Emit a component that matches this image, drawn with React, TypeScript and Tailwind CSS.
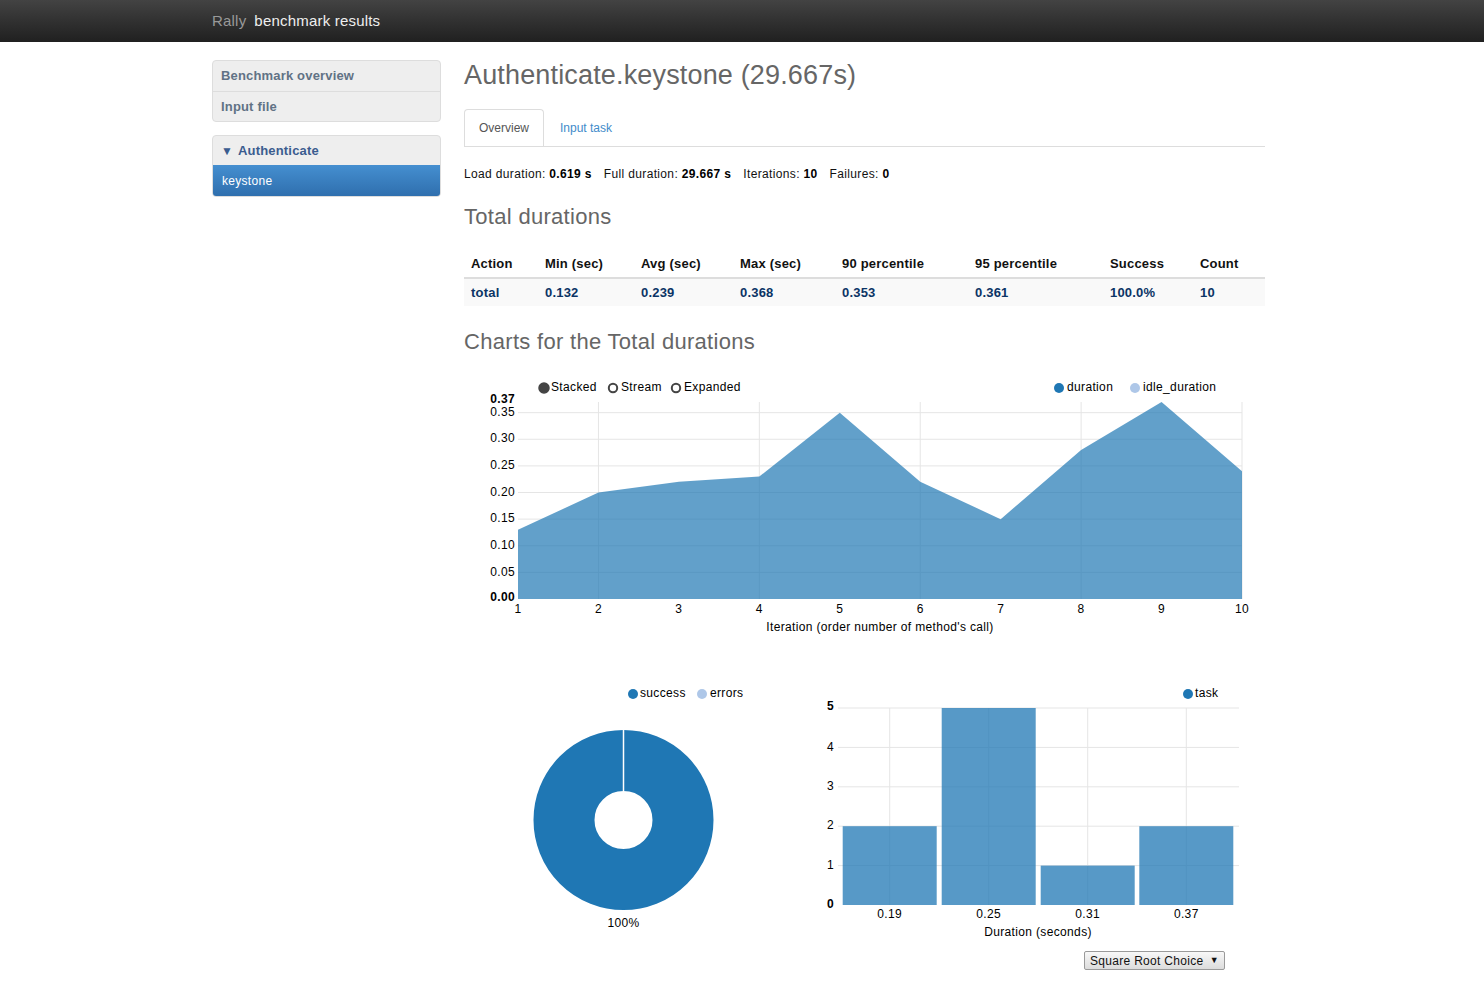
import React from 'react'

const areaData = [0.13, 0.2, 0.22, 0.23, 0.35, 0.22, 0.15, 0.28, 0.37, 0.24]
const ax = (i: number) => 54 + i * 80.444
const ay = (v: number) => 228 - v * 532.4

const histData = [2, 5, 1, 2]
const hy = (v: number) => 224 - v * 39.4

const cols = [
  { label: 'Action', value: 'total', w: 'w-[74px]' },
  { label: 'Min (sec)', value: '0.132', w: 'w-[96px]' },
  { label: 'Avg (sec)', value: '0.239', w: 'w-[99px]' },
  { label: 'Max (sec)', value: '0.368', w: 'w-[102px]' },
  { label: '90 percentile', value: '0.353', w: 'w-[133px]' },
  { label: '95 percentile', value: '0.361', w: 'w-[135px]' },
  { label: 'Success', value: '100.0%', w: 'w-[90px]' },
  { label: 'Count', value: '10', w: 'w-[72px]' },
]

function AreaChart() {
  const pts = areaData.map((v, i) => `${ax(i)},${ay(v)}`).join(' L')
  const path = `M${ax(0)},228 L${pts} L${ax(9)},228 Z`
  const yTicks = [0.05, 0.1, 0.15, 0.2, 0.25, 0.3, 0.35]
  return (
    <svg width={801} height={270} className="block text-[12px] tracking-[0.35px]">
      {/* legend */}
      <circle cx={80} cy={17} r={5} fill="#444" stroke="#444" strokeWidth={1.5} />
      <text x={87} y={17} dominantBaseline="middle" fill="#000">Stacked</text>
      <circle cx={149} cy={17} r={4.2} fill="none" stroke="#444" strokeWidth={2} />
      <text x={157} y={17} dominantBaseline="middle" fill="#000">Stream</text>
      <circle cx={212} cy={17} r={4.2} fill="none" stroke="#444" strokeWidth={2} />
      <text x={220} y={17} dominantBaseline="middle" fill="#000">Expanded</text>
      <circle cx={595} cy={17} r={5} fill="#1f77b4" />
      <text x={603} y={17} dominantBaseline="middle" fill="#000">duration</text>
      <circle cx={671} cy={17} r={5} fill="#aec7e8" />
      <text x={679} y={17} dominantBaseline="middle" fill="#000">idle_duration</text>

      {/* grid */}
      {yTicks.map((t) => (
        <line key={t} x1={54} x2={778} y1={ay(t)} y2={ay(t)} stroke="#e5e5e5" />
      ))}
      {[1, 3, 5, 7, 9].map((i) => (
        <line key={i} x1={ax(i)} x2={ax(i)} y1={31} y2={228} stroke="#e5e5e5" />
      ))}

      <path d={path} fill="#1f77b4" fillOpacity={0.7} />

      {/* y axis */}
      {yTicks.map((t) => (
        <text key={t} x={51} y={ay(t)} textAnchor="end" dominantBaseline="middle" fill="#000">
          {t.toFixed(2)}
        </text>
      ))}
      <text x={51} y={29} textAnchor="end" dominantBaseline="middle" fontWeight="bold" fill="#000">0.37</text>
      <text x={51} y={227} textAnchor="end" dominantBaseline="middle" fontWeight="bold" fill="#000">0.00</text>

      {/* x axis */}
      {areaData.map((_, i) => (
        <text key={i} x={ax(i)} y={239} textAnchor="middle" dominantBaseline="middle" fill="#000">
          {i + 1}
        </text>
      ))}
      <text x={416} y={257} textAnchor="middle" dominantBaseline="middle" fill="#000">
        Iteration (order number of method's call)
      </text>
    </svg>
  )
}

function PieChart() {
  return (
    <svg width={330} height={255} className="block text-[12px] tracking-[0.35px]">
      <circle cx={169} cy={13} r={5} fill="#1f77b4" />
      <text x={176} y={13} dominantBaseline="middle" fill="#000">success</text>
      <circle cx={238} cy={13} r={5} fill="#aec7e8" />
      <text x={246} y={13} dominantBaseline="middle" fill="#000">errors</text>

      <circle cx={159.5} cy={139} r={59.5} fill="none" stroke="#1f77b4" strokeWidth={61} />
      <line x1={159.5} x2={159.5} y1={49} y2={110} stroke="#fff" strokeWidth={1.5} />
      <text x={159.5} y={243} textAnchor="middle" dominantBaseline="middle" fill="#000">100%</text>
    </svg>
  )
}

function Histogram() {
  const centers = [95.7, 194.7, 293.7, 392.3]
  const labels = ['0.19', '0.25', '0.31', '0.37']
  return (
    <svg width={471} height={265} className="block text-[12px] tracking-[0.35px]">
      <circle cx={394} cy={13} r={5} fill="#1f77b4" />
      <text x={401} y={13} dominantBaseline="middle" fill="#000">task</text>

      {[1, 2, 3, 4, 5].map((t) => (
        <line key={t} x1={44} x2={445} y1={hy(t)} y2={hy(t)} stroke="#e5e5e5" />
      ))}
      {centers.map((c) => (
        <line key={c} x1={c} x2={c} y1={27} y2={224} stroke="#e5e5e5" />
      ))}
      {histData.map((v, i) => (
        <rect key={i} x={centers[i] - 47} y={hy(v)} width={94} height={224 - hy(v)} fill="#1f77b4" fillOpacity={0.75} />
      ))}

      {[1, 2, 3, 4].map((t) => (
        <text key={t} x={40} y={hy(t)} textAnchor="end" dominantBaseline="middle" fill="#000">{t}</text>
      ))}
      <text x={40} y={26} textAnchor="end" dominantBaseline="middle" fontWeight="bold" fill="#000">5</text>
      <text x={40} y={224} textAnchor="end" dominantBaseline="middle" fontWeight="bold" fill="#000">0</text>

      {centers.map((c, i) => (
        <text key={c} x={c} y={234} textAnchor="middle" dominantBaseline="middle" fill="#000">{labels[i]}</text>
      ))}
      <text x={244} y={252} textAnchor="middle" dominantBaseline="middle" fill="#000">Duration (seconds)</text>
    </svg>
  )
}

export default function App() {
  return (
    <div className="min-h-screen bg-white font-['Liberation_Sans',Arial,sans-serif] text-[#333]">
      <div className="h-[42px] bg-linear-to-b from-[#434343] to-[#202020]">
        <div className="w-[1060px] mx-auto h-full flex items-center text-[15px] tracking-[0.2px]">
          <span className="text-[#999]">Rally</span>
          <span className="ml-[8px] text-[#eee]">benchmark results</span>
        </div>
      </div>

      <div className="w-[1060px] mx-auto flex pt-[18px] pb-[20px]">
        {/* sidebar */}
        <div className="w-[229px] mr-[23px] shrink-0">
          <div className="border border-[#ddd] rounded-[4px] bg-[#eee] text-[13px] tracking-[0.17px] font-bold text-[#617285]">
            <div className="h-[30px] flex items-center pl-[8px]">Benchmark overview</div>
            <div className="h-[30px] flex items-center pl-[8px] border-t border-[#ddd]">Input file</div>
          </div>
          <div className="mt-[13px] border border-[#ddd] rounded-[4px] bg-[#eee] overflow-hidden">
            <div className="h-[29px] flex items-center pl-[8px] text-[13px] tracking-[0.17px] font-bold text-[#3b5c8f]">
              <span className="text-[12px] mr-[5px]">▼</span>Authenticate
            </div>
            <div className="h-[31px] flex items-center pl-[9px] text-[12px] tracking-[0.3px] text-white bg-linear-to-b from-[#458fd0] to-[#2f6fae]">
              keystone
            </div>
          </div>
        </div>

        {/* main */}
        <div className="w-[801px]">
          <h1 className="text-[27px] leading-[30px] tracking-[0.16px] text-[#666]">Authenticate.keystone (29.667s)</h1>

          <div className="mt-[19px] flex border-b border-[#ddd] text-[12px]">
            <div className="h-[37px] px-[14px] flex items-center border border-[#ddd] border-b-0 rounded-t-[4px] bg-white text-[#555] -mb-px">
              Overview
            </div>
            <div className="h-[37px] ml-[2px] px-[14px] flex items-center text-[#428bca]">Input task</div>
          </div>

          <div className="mt-[19px] flex gap-[12px] text-[12px] leading-[17px] tracking-[0.35px] text-[#111]">
            <span>Load duration: <b className="text-black">0.619 s</b></span>
            <span>Full duration: <b className="text-black">29.667 s</b></span>
            <span>Iterations: <b className="text-black">10</b></span>
            <span>Failures: <b className="text-black">0</b></span>
          </div>

          <h2 className="mt-[21px] text-[22px] leading-[26px] tracking-[0.3px] text-[#666]">Total durations</h2>

          <div className="mt-[20px] text-[13px] tracking-[0.2px] font-bold">
            <div className="flex h-[29px] items-center border-b-2 border-[#ddd] text-[#111]">
              {cols.map((c) => (
                <div key={c.label} className={`${c.w} pl-[7px]`}>{c.label}</div>
              ))}
            </div>
            <div className="flex h-[27px] items-center bg-[#f9f9f9] text-[#0b3465]">
              {cols.map((c) => (
                <div key={c.label} className={`${c.w} pl-[7px]`}>{c.value}</div>
              ))}
            </div>
          </div>

          <h2 className="mt-[23px] text-[22px] leading-[26px] tracking-[0.3px] text-[#666]">Charts for the Total durations</h2>

          <div className="mt-[16px]">
            <AreaChart />
          </div>

          <div className="mt-[40px] flex items-start">
            <PieChart />
            <Histogram />
          </div>

          <div className="mt-[5px] flex justify-end pr-[40px]">
            <div className="w-[141px] h-[19px] flex items-center justify-between px-[5px] border border-[#9a9a9a] rounded-[2px] bg-linear-to-b from-[#f8f8f8] to-[#dcdcdc] text-[12px] tracking-[0.3px] text-[#111]">
              <span>Square Root Choice</span>
              <span className="text-[9px]">▼</span>
            </div>
          </div>
        </div>
      </div>
    </div>
  )
}
